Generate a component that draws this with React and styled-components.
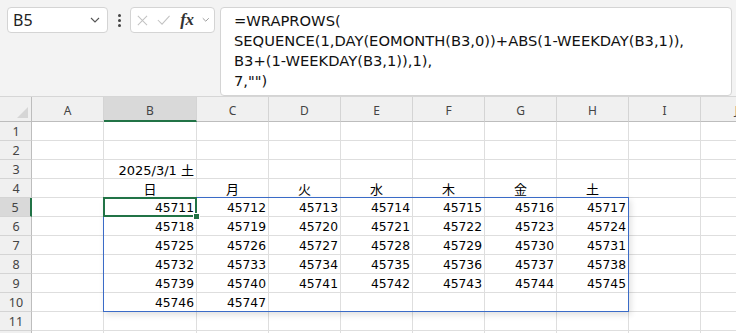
import React from "react"
import styled, { createGlobalStyle } from "styled-components"

const GlobalStyle = createGlobalStyle`
  html, body {
    margin: 0;
    padding: 0;
    background: #f3f3f3;
    overflow: hidden;
  }
  body {
    font-family: "DejaVu Sans", "Noto Sans CJK JP", sans-serif;
    color: #000;
  }
`

const Page = styled.div`
    width: 736px;
    height: 333px;
    overflow: hidden;
    display: flex;
    flex-direction: column;
`

const Toolbar = styled.div`
    height: 96px;
    box-sizing: border-box;
    padding: 7px 4px 0 7px;
    display: flex;
    align-items: flex-start;
    background: #f3f3f3;
    flex-shrink: 0;
`

const Box = styled.div`
    box-sizing: border-box;
    height: 26px;
    background: #fff;
    border: 1px solid #d4d4d4;
    border-radius: 4px;
    display: flex;
    align-items: center;
`

const NameBox = styled(Box)`
    width: 101px;
    padding: 0 7px 0 5px;
    justify-content: space-between;
    font-family: "Noto Sans", sans-serif;
    font-size: 16px;
    color: #222;
`

const Dots = styled.div`
    width: 22px;
    display: flex;
    flex-direction: column;
    align-items: center;
    gap: 2px;
    padding-top: 7px;
    span {
        width: 3px;
        height: 3px;
        border-radius: 50%;
        background: #444;
    }
`

const FxBox = styled(Box)`
    width: 85px;
    padding: 0 4px 0 6px;
    gap: 9px;
`

const FxLabel = styled.span`
    font-family: "Liberation Serif", serif;
    font-style: italic;
    font-size: 17px;
    font-weight: bold;
    color: #333;
    letter-spacing: -0.5px;
    margin-left: 1px;
`

const FormulaBox = styled.div`
    box-sizing: border-box;
    margin-left: 5px;
    flex: 1;
    height: 89px;
    background: #fff;
    border: 1px solid #d4d4d4;
    border-radius: 4px;
    padding: 3px 0 0 13px;
    overflow: hidden;
`

const FormulaLine = styled.div`
    height: 20px;
    line-height: 20px;
    font-family: "DejaVu Sans", sans-serif;
    font-size: 14.7px;
    color: #111;
    white-space: pre;
`

const SheetWrap = styled.div`
    position: relative;
    border-top: 1px solid #d6d6d6;
    background: #fff;
    flex: 1;
    overflow: hidden;
`

const Sheet = styled.div`
    display: grid;
    grid-template-columns: 32px 72px 93px repeat(8, 72px);
    grid-template-rows: 25px repeat(12, 19px);
`

const Corner = styled.div`
    background: #f0f0f0;
    border-right: 1px solid #bdbdbd;
    border-bottom: 1px solid #bdbdbd;
    box-sizing: border-box;
    display: flex;
    justify-content: flex-end;
    align-items: flex-end;
    padding: 0 3px 3px 0;
`

const Triangle = styled.div`
    width: 0;
    height: 0;
    border-left: 11px solid transparent;
    border-bottom: 11px solid #d6d6d6;
`

const ColHead = styled.div`
    box-sizing: border-box;
    background: ${p => (p.$active ? "#d9d9d9" : "#f0f0f0")};
    border-right: 1px solid #d4d4d4;
    border-bottom: ${p => (p.$active ? "2px solid #217346" : "1px solid #bdbdbd")};
    display: flex;
    align-items: center;
    justify-content: center;
    padding-top: ${p => (p.$active ? "3px" : "2px")};
    font-family: "Noto Sans", sans-serif;
    font-size: 12px;
    color: #444;
`

const RowHead = styled.div`
    box-sizing: border-box;
    background: ${p => (p.$active ? "#d9d9d9" : "#f0f0f0")};
    border-right: ${p => (p.$active ? "2px solid #217346" : "1px solid #bdbdbd")};
    border-bottom: 1px solid #d4d4d4;
    display: flex;
    align-items: center;
    justify-content: center;
    padding-left: ${p => (p.$active ? "0" : "1px")};
    font-family: "Noto Sans", sans-serif;
    font-size: 12.5px;
    color: #444;
`

const Cell = styled.div`
    box-sizing: border-box;
    border-right: 1px solid #dedede;
    border-bottom: 1px solid #dedede;
    display: flex;
    align-items: center;
    justify-content: ${p => p.$align || "flex-end"};
    padding: 1px 2px 0 2px;
    font-size: ${p => (p.$cjk ? "13px" : "12.3px")};
    white-space: nowrap;
`

const SpillRange = styled.div`
    position: absolute;
    left: 103px;
    top: 100px;
    width: 526px;
    height: 115px;
    box-sizing: border-box;
    border: 1px solid #3a6bc7;
    box-shadow: 2px 3px 6px rgba(0, 0, 0, 0.12);
    pointer-events: none;
`

const Selection = styled.div`
    position: absolute;
    left: 103px;
    top: 100px;
    width: 94px;
    height: 20px;
    box-sizing: border-box;
    border: 2px solid #217346;
    pointer-events: none;
`

const FillHandle = styled.div`
    position: absolute;
    left: 193px;
    top: 116px;
    width: 5px;
    height: 5px;
    background: #217346;
    border: 1px solid #fff;
`

function Chevron({ color = "#555", size = 10 }) {
    return (
        <svg width={size} height={size * 0.6} viewBox="0 0 10 6">
            <path d="M1 1 L5 5 L9 1" fill="none" stroke={color} strokeWidth="1.1" />
        </svg>
    )
}

const columns = ["A", "B", "C", "D", "E", "F", "G", "H", "I", "J"]
const weekdays = ["日", "月", "火", "水", "木", "金", "土"]

function cellValue(row, col) {
    // col: 0 = A, 1 = B ...
    if (row === 3 && col === 1) return { text: "2025/3/1 土", cjk: true }
    if (row === 4 && col >= 1 && col <= 7) return { text: weekdays[col - 1], align: "center", cjk: true }
    if (row >= 5 && row <= 10 && col >= 1 && col <= 7) {
        const n = 45711 + (row - 5) * 7 + (col - 1)
        if (n > 45747) return null
        return { text: String(n) }
    }
    return null
}

const formula = [
    "=WRAPROWS(",
    "SEQUENCE(1,DAY(EOMONTH(B3,0))+ABS(1-WEEKDAY(B3,1)),",
    "B3+(1-WEEKDAY(B3,1)),1),",
    '7,"")',
]

export default function App() {
    const rows = Array.from({ length: 12 }, (_, i) => i + 1)

    return (
        <Page>
            <GlobalStyle />
            <Toolbar>
                <NameBox>
                    <span>B5</span>
                    <Chevron />
                </NameBox>
                <Dots>
                    <span />
                    <span />
                    <span />
                </Dots>
                <FxBox>
                    <svg width="13" height="13" viewBox="0 0 13 13">
                        <path d="M1 1 L12 12 M12 1 L1 12" stroke="#c2c2c2" strokeWidth="1.2" />
                    </svg>
                    <svg width="16" height="12" viewBox="0 0 16 12">
                        <path d="M1 6 L6 11 L15 1" fill="none" stroke="#c2c2c2" strokeWidth="1.2" />
                    </svg>
                    <FxLabel>fx</FxLabel>
                    <Chevron color="#888" size={9} />
                </FxBox>
                <FormulaBox>
                    {formula.map((line, i) => (
                        <FormulaLine key={i}>{line}</FormulaLine>
                    ))}
                </FormulaBox>
            </Toolbar>
            <SheetWrap>
                <Sheet>
                    <Corner>
                        <Triangle />
                    </Corner>
                    {columns.map(c => (
                        <ColHead key={c} $active={c === "B"}>{c}</ColHead>
                    ))}
                    {rows.map(r => (
                        <React.Fragment key={r}>
                            <RowHead $active={r === 5}>{r}</RowHead>
                            {columns.map((c, ci) => {
                                const v = cellValue(r, ci)
                                return (
                                    <Cell key={c} $align={v && v.align} $cjk={v && v.cjk}>
                                        {v ? v.text : ""}
                                    </Cell>
                                )
                            })}
                        </React.Fragment>
                    ))}
                </Sheet>
                <SpillRange />
                <Selection />
                <FillHandle />
            </SheetWrap>
        </Page>
    )
}
